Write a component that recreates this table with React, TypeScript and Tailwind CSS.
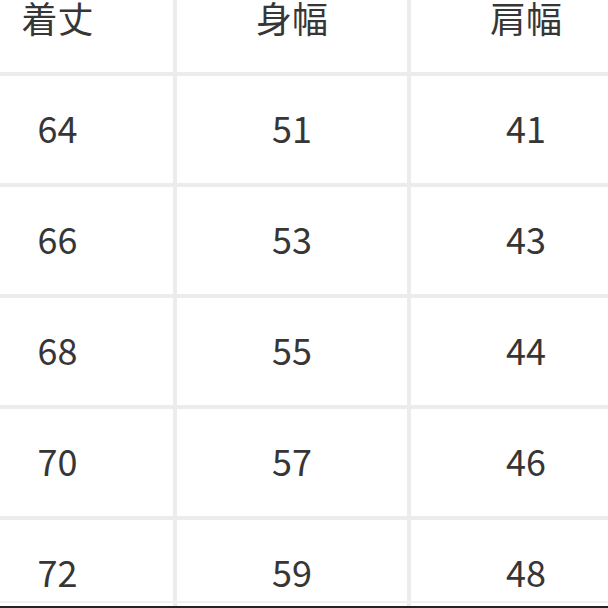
const headers = ['着丈', '身幅', '肩幅'];

const rows = [
  ['64', '51', '41'],
  ['66', '53', '43'],
  ['68', '55', '44'],
  ['70', '57', '46'],
  ['72', '59', '48'],
];

export default function App() {
  return (
    <div
      className="relative w-[608px] h-[608px] overflow-hidden bg-white text-[#363636]"
      style={{ fontFamily: '"Noto Sans CJK JP", "Noto Sans", sans-serif' }}
    >
      <div className="-ml-[58px] -mt-[35px] grid grid-cols-[231px_230px_230px] auto-rows-[107px] gap-[4px] bg-[#ececec] w-max">
        {headers.map((h) => (
          <div key={h} className="flex items-center justify-center bg-white pb-[4px] text-[36px] leading-none">
            {h}
          </div>
        ))}
        {rows.map((row, i) =>
          row.map((v, j) => (
            <div key={`${i}-${j}`} className="flex items-center justify-center bg-white pb-[5px] text-[36px] leading-none">
              {v}
            </div>
          ))
        )}
      </div>
      <div className="absolute left-0 right-0 bottom-[5px] h-[2px] bg-[#f0f0f0]" />
      <div className="absolute left-0 right-0 bottom-0 h-[2px] bg-[#222222]" />
    </div>
  );
}
